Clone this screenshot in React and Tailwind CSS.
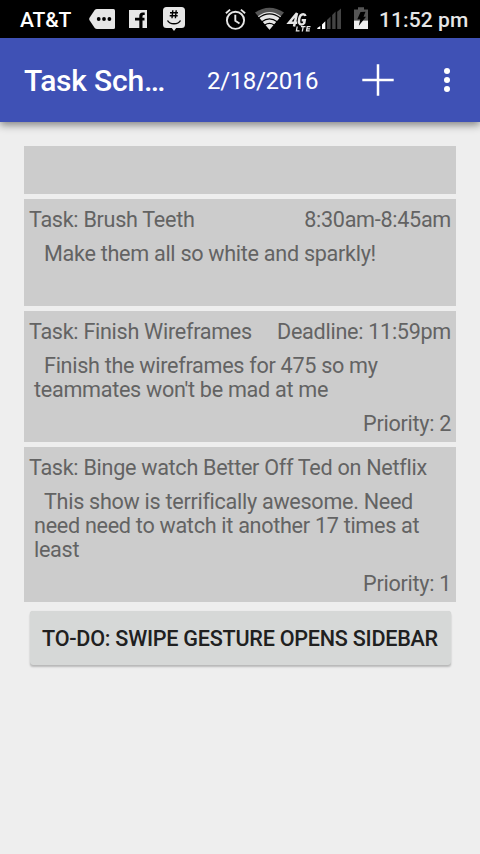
import React from "react";

function StatusBar() {
  return (
    <div className="flex h-[38px] items-center bg-black pl-5 text-[#e6e6e6]">
      <span className="w-[69px] whitespace-nowrap text-[21px] font-medium leading-[38px] tracking-[-0.1px] text-white pt-[2px]">AT&amp;T</span>
      <svg className="h-[38px] w-[27px] shrink-0" viewBox="89 0 27 38">
        <path d="M97 9h16.500q1.500 0 1.500 1.500v17q0 1.500-1.500 1.500H97q-1.300 0-2.300-1l-5-7.500q-1-1.500 0-3l5-7.500q.8-1 2.300-1z" fill="#e6e6e6" />
        <circle cx="98.700" cy="19" r="1.900" fill="#000" />
        <circle cx="104" cy="19" r="1.900" fill="#000" />
        <circle cx="109.400" cy="19" r="1.900" fill="#000" />
      </svg>
      <svg className="ml-[12px] h-[38px] w-[20px] shrink-0" viewBox="128 0 20 38">
        <path d="M129 10h18v18h-4.500v-7.500h2v-2.700h-2v-1.600q0-1.200 1.200-1.200h1v-2.500h-2q-3.400 0-3.400 3.500v1.800H135v2.700h4.300V28H129z" fill="#e6e6e6" />
      </svg>
      <svg className="ml-[14px] h-[38px] w-[24px] shrink-0" viewBox="162 0 24 38">
        <path d="M166.500 7h15q3.500 0 3.500 3.500v14q0 3.500-3.500 3.500h-5.300l-2.200 3-2.200-3h-5.300q-3.500 0-3.500-3.500v-14q0-3.500 3.500-3.500z" fill="#e6e6e6" />
        <path d="M172.800 10.200l-.8 8M176.200 10.200l-.8 8M170 12.700h8M169.700 15.800h8M167.500 20.500q1.800 3.300 6.500 3.300t6.500-3.300" fill="none" stroke="#000" strokeWidth="1.400" />
      </svg>
      <svg className="ml-[38px] h-[38px] w-[23px] shrink-0" viewBox="224 0 23 38" fill="none" stroke="#e6e6e6" strokeWidth="1.900">
        <circle cx="235.500" cy="20.300" r="8.600" />
        <path d="M235.300 14.800v6l4.200 2.700M225.900 13.200l4.200-3.600M245.100 13.200l-4.200-3.600" />
      </svg>
      <svg className="ml-[7px] h-[38px] w-[31px] shrink-0" viewBox="254 0 31 38">
        <path d="M269.500 29.700L255 12.600Q269.500 2.800 284 12.600z" fill="#555" />
        <path d="M269.500 29.700l-11.500-13.500q11.500-8.500 23 0z" fill="#e6e6e6" />
        <path d="M258.500 18q11-8.300 22 0M261.800 21.700q7.700-5.500 15.400 0M264.800 25q4.700-3.200 9.400 0" fill="none" stroke="#000" strokeWidth="1.200" />
      </svg>
      <svg className="ml-[1px] h-[38px] w-[26px] shrink-0" viewBox="286 0 26 38">
        <path d="M297 13l-8 9.700h8.200M297 13l-3 13.500M305.500 16q-.5-1.700-2.300-1.700-3.300 0-4.100 5-.7 5.200 2.400 5.200 1.900 0 2.700-1.500l.5-2.700h-3" fill="none" stroke="#e6e6e6" strokeWidth="2.500" />
        <path d="M297.200 26.500l-.8 4.400h3.100M301 26.700h4.500M303.200 26.700l-.9 4.800M310.500 26.700h-3.200l-.8 4.200h3.200M307 28.900h3" fill="none" stroke="#e6e6e6" strokeWidth="1.300" />
      </svg>
      <svg className="ml-[5px] h-[38px] w-[25px] shrink-0" viewBox="317 0 25 38">
        <path d="M317.300 29v-1l3-2v3zM322 29v-4.500l3.300-3.200V29z" fill="#fff" />
        <path d="M327 29v-9l3.600-3.500V29zM332.200 29V15l3.400-3.400V29zM337.200 29V11.800l3.800-3.300V29z" fill="#444" />
      </svg>
      <svg className="ml-[11px] h-[38px] w-[16px] shrink-0" viewBox="353 0 16 38">
        <path d="M354 9.500h4V7.300h6v2.200h4v11h-14z" fill="#555" />
        <path d="M354 20.500h14V29h-14z" fill="#eee" />
        <path d="M360.500 12l5-.2-2 5h2.500l-7.200 9 1.500-6.600h-3z" fill="#000" />
      </svg>
      <span className="ml-[10px] whitespace-nowrap text-[21px] font-medium leading-[38px] tracking-[0.1px] pt-[2px]">11:52 pm</span>
    </div>
  );
}

function AppBar() {
  return (
    <header className="relative flex h-[84px] items-center bg-[#3f51b5] pl-6 text-white shadow-[0_3px_8px_rgba(0,0,0,0.45)]">
      <h1 className="w-[183px] whitespace-nowrap pt-px text-[30px] font-medium leading-[36px] tracking-[-0.2px]">Task Sch…</h1>
      <span className="w-[154px] whitespace-nowrap pt-[2px] text-[24px] leading-[36px] tracking-[-0.35px]">2/18/2016</span>
      <svg className="h-[34px] w-[34px]" viewBox="0 0 34 34" stroke="#fff" strokeWidth="2.500">
        <path d="M17 1.300v31.400M1.300 17h31.400" />
      </svg>
      <svg className="ml-12 h-[28px] w-[8px]" viewBox="0 0 8 28" fill="#fff">
        <circle cx="4" cy="5" r="3" />
        <circle cx="4" cy="14" r="3" />
        <circle cx="4" cy="23" r="3" />
      </svg>
    </header>
  );
}

function Task({ name, time, lines, priority, height }) {
  return (
    <section className={`${height} flex flex-col bg-[#ccc] px-[5px] pt-[9px] pb-[6px]`}>
      <div className="flex justify-between whitespace-nowrap">
        <span>Task: {name}</span>
        <span>{time}</span>
      </div>
      <p className="mt-[10px] pl-[5px]">
        {lines.map((line, i) => (
          <span key={line} className={i === 0 ? "block whitespace-nowrap pl-[10px]" : "block whitespace-nowrap"}>{line}</span>
        ))}
      </p>
      {priority && <div className="mt-[10px] text-right">Priority: {priority}</div>}
    </section>
  );
}

export default function App() {
  return (
    <div className="h-[854px] w-[480px] overflow-hidden bg-[#eee] font-['Roboto',sans-serif]">
      <StatusBar />
      <AppBar />
      <main className="flex flex-col gap-[5px] px-6 pt-6 text-[21.6px] leading-[24px] tracking-[-0.29px] text-[#636363]">
        <div className="h-[48px] bg-[#ccc]" />
        <Task height="h-[107px]" name="Brush Teeth" time="8:30am-8:45am" lines={["Make them all so white and sparkly!"]} />
        <Task height="h-[131px]" name="Finish Wireframes" time="Deadline: 11:59pm" lines={["Finish the wireframes for 475 so my", "teammates won't be mad at me"]} priority="2" />
        <Task height="h-[155px]" name="Binge watch Better Off Ted on Netflix" lines={["This show is terrifically awesome. Need", "need need to watch it another 17 times at", "least"]} priority="1" />
        <button className="mx-[5.5px] mt-1 h-[54px] whitespace-nowrap rounded-[3px] bg-[#d6d8d7] pt-px font-medium tracking-[-0.26px] text-[#202020] shadow-[0_2px_2px_rgba(0,0,0,0.22),0_0_1px_rgba(0,0,0,0.15)]">
          TO-DO: SWIPE GESTURE OPENS SIDEBAR
        </button>
      </main>
    </div>
  );
}
